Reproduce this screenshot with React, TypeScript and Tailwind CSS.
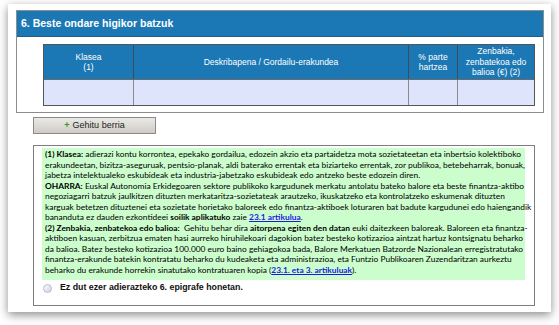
import React from "react";

const blue = "bg-[#1b78b4]";

function Bold({ children }: { children: React.ReactNode }) {
  return <span className="font-bold">{children}</span>;
}
function Link({ children }: { children: React.ReactNode }) {
  return <span className="font-bold underline text-[#1a1ae0]">{children}</span>;
}

export default function App() {
  return (
    <div className="w-[559px] h-[325px] bg-white overflow-hidden" style={{ fontFamily: "Arial, 'Liberation Sans', sans-serif" }}>
      <div className="ml-[8px] mt-[4px] w-[543px] h-[308px] bg-white shadow-[0_3px_9px_rgba(0,0,0,0.45)] pt-[6px] flex flex-col">
        {/* Card */}
        <div className="ml-[8px] w-[528px] h-[103px] border border-[#8d8d8d] flex flex-col">
          <div className={`${blue} h-[26px] flex items-center pl-[4px] text-white font-bold text-[10.5px] border-b border-[#2a5d80]`} style={{ fontFamily: "'Liberation Sans', Arial, sans-serif" }}>
            6. Beste ondare higikor batzuk
          </div>
          <div className="ml-[26px] mt-[7px] w-[492px] border border-[#555] flex flex-col">
            <div className={`flex h-[34px] ${blue} text-white text-[8.5px] leading-[10.5px] text-center`}>
              <div className="w-[90px] flex items-center justify-center border-r border-[#3a4d5e]">Klasea<br />(1)</div>
              <div className="w-[275px] flex items-center justify-center border-r border-[#3a4d5e]">Deskribapena / Gordailu-erakundea</div>
              <div className="w-[49px] flex items-center justify-center border-r border-[#3a4d5e]">% parte<br />hartzea</div>
              <div className="flex-1 flex items-center justify-center">Zenbakia,<br />zenbatekoa edo<br />balioa (€) (2)</div>
            </div>
            <div className="flex h-[26px] bg-[#dde4fb] border-t border-[#6a6a6a]">
              <div className="w-[90px] border-r border-[#8a8a8a]"></div>
              <div className="w-[275px] border-r border-[#8a8a8a]"></div>
              <div className="w-[49px] border-r border-[#8a8a8a]"></div>
              <div className="flex-1"></div>
            </div>
          </div>
        </div>

        {/* Button */}
        <div className="ml-[25px] mt-[4px] w-[123px] h-[17px] border border-[#8a8a8a] bg-gradient-to-b from-[#ebe9e5] to-[#cfccc6] flex items-center justify-center text-[9px] text-[#222]">
          <span className="text-[#2c9a2c] font-bold mr-[3px]">+</span>Gehitu berria
        </div>

        {/* Lower box */}
        <div className="ml-[25px] mt-[11px] w-[502px] h-[161px] border border-[#7d7d7d] pt-[2px] pl-[8px] pr-[9px] flex flex-col">
          <div className="bg-[#ccfdcc] h-[132px] pl-[3px] pt-[1px] text-[8.4px] leading-[10.5px] text-black whitespace-nowrap" style={{ fontFamily: "Lato, 'Open Sans', sans-serif" }}>
            <div><Bold>(1) Klasea:</Bold> adierazi kontu korrontea, epekako gordailua, edozein akzio eta partaidetza mota sozietateetan eta inbertsio kolektiboko</div>
            <div>erakundeetan, bizitza-aseguruak, pentsio-planak, aldi baterako errentak eta biziarteko errentak, zor publikoa, betebeharrak, bonuak,</div>
            <div>jabetza intelektualeko eskubideak eta industria-jabetzako eskubideak edo antzeko beste edozein diren.</div>
            <div><Bold>OHARRA:</Bold> Euskal Autonomia Erkidegoaren sektore publikoko kargudunek merkatu antolatu bateko balore eta beste finantza-aktibo</div>
            <div>negoziagarri batzuk jaulkitzen dituzten merkataritza-sozietateak arautzeko, ikuskatzeko eta kontrolatzeko eskumenak dituzten</div>
            <div>karguak betetzen dituztenei eta sozietate horietako baloreek edo finantza-aktiboek loturaren bat badute kargudunei edo haiengandik</div>
            <div>bananduta ez dauden ezkontideei <Bold>soilik aplikatuko</Bold> zaie <Link>23.1 artikulua</Link>.</div>
            <div><Bold>(2) Zenbakia, zenbatekoa edo balioa:</Bold>&nbsp; Gehitu behar dira <Bold>aitorpena egiten den datan</Bold> euki daitezkeen baloreak. Baloreen eta finantza-</div>
            <div>aktiboen kasuan, zerbitzua ematen hasi aurreko hiruhilekoari dagokion batez besteko kotizazioa aintzat hartuz kontsignatu beharko</div>
            <div>da balioa. Batez besteko kotizazioa 100.000 euro baino gehiagokoa bada, Balore Merkatuen Batzorde Nazionalean erregistratutako</div>
            <div>finantza-erakunde batekin kontratatu beharko du kudeaketa eta administrazioa, eta Funtzio Publikoaren Zuzendaritzan aurkeztu</div>
            <div>beharko du erakunde horrekin sinatutako kontratuaren kopia (<Link>23.1. eta 3. artikuluak</Link>).</div>
          </div>
          <div className="flex items-center mt-[2px] h-[12px]">
            <div className="ml-[1px] w-[9px] h-[9px] rounded-full border border-[#b8bccc] bg-gradient-to-br from-[#ffffff] to-[#c9cfe6]"></div>
            <span className="ml-[8px] font-bold text-[8.8px] text-[#111]">Ez dut ezer adierazteko 6. epigrafe honetan.</span>
          </div>
        </div>
      </div>
    </div>
  );
}
